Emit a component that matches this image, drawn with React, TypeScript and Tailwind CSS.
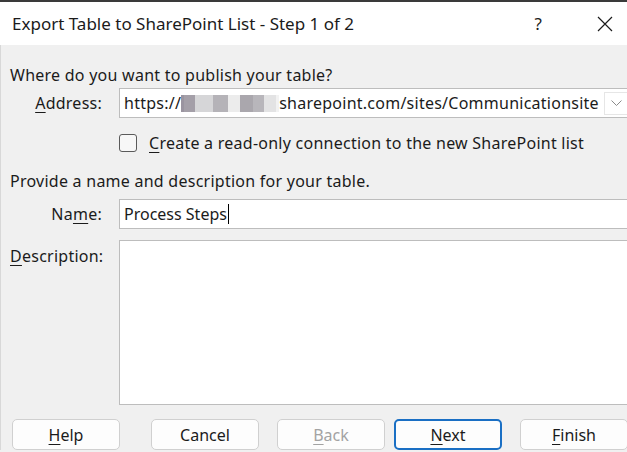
import React from "react";

const font = { fontFamily: '"Noto Sans", "Open Sans", sans-serif' };

const U: React.FC<{ children: React.ReactNode }> = ({ children }) => (
  <span className="underline underline-offset-[3px] decoration-1">{children}</span>
);

interface DialogButtonProps {
  children: React.ReactNode;
  className?: string;
  primary?: boolean;
  disabled?: boolean;
}

const DialogButton: React.FC<DialogButtonProps> = ({ children, className = "", primary, disabled }) => (
  <div
    className={`flex h-[31px] w-[108px] shrink-0 items-center justify-center rounded-[5px] bg-[#fdfdfd] ${
      primary ? "border-2 border-[#1a6fc4]" : "border border-[#d0d0d0]"
    } ${disabled ? "text-[#a3a3a3]" : "text-[#1b1b1b]"} ${className}`}
  >
    {children}
  </div>
);

const App: React.FC = () => {
  return (
    <div className="h-[452px] w-[627px] overflow-hidden bg-[#f0f0f0] text-[#1b1b1b]" style={font}>
      <div className="h-[2px] bg-[#3a3a3a]" />
      <div className="flex h-[43px] items-center bg-white pl-[12px] text-[17px]">
        <span className="flex-1">Export Table to SharePoint List - Step 1 of 2</span>
        <span className="mr-[55px] text-[17px]">?</span>
        <svg width="16" height="16" viewBox="0 0 16 16" className="mr-[14px]">
          <path d="M1 1 L15 15 M15 1 L1 15" stroke="#1b1b1b" strokeWidth="1.2" fill="none" />
        </svg>
      </div>

      <div className="border-l border-[#d8d8d8] pl-[9px] text-[16px] leading-[20px] tracking-[0.25px]">
        <div className="pt-[20px]">Where do you want to publish your table?</div>

        <div className="mt-[3px] flex items-center">
          <div className="w-[109px] pr-[17px] text-right">
            <U>A</U>ddress:
          </div>
          <div className="flex h-[30px] flex-1 items-center border border-[#bdbdbd] bg-white pl-[4px] -mr-[6px]">
            <span>https://</span>
            <span className="flex h-[17px] items-center">
              <span className="h-[17px] w-[3px] bg-[#9a94a0]" />
              <span className="h-[17px] w-[11px] bg-[#a49fa8]" />
              <span className="h-[17px] w-[18px] bg-[#d6d6d8]" />
              <span className="h-[17px] w-[15px] bg-[#b5b3b8]" />
              <span className="h-[17px] w-[12px] bg-[#ececec]" />
              <span className="h-[17px] w-[13px] bg-[#aaa7ad]" />
              <span className="h-[17px] w-[11px] bg-[#b8b6bb]" />
              <span className="h-[17px] w-[12px] bg-[#e3e3e4]" />
              <span className="h-[17px] w-[3px] bg-[#f2f2f2]" />
            </span>
            <span className="flex-1 truncate">sharepoint.com/sites/Communicationsite</span>
            <div className="mr-[4px] flex h-[23px] w-[24px] shrink-0 items-center justify-center border border-[#e6e6e6] bg-white">
              <svg width="11" height="6" viewBox="0 0 11 6">
                <path d="M0.5 0.5 L5.5 5.5 L10.5 0.5" stroke="#8a8a8a" strokeWidth="1" fill="none" />
              </svg>
            </div>
          </div>
        </div>

        <div className="mt-[15px] flex h-[20px] items-center pl-[109px]">
          <div className="h-[18px] w-[18px] rounded-[3px] border-[1.5px] border-[#5a5a5a] bg-[#f7f7f7]" />
          <span className="ml-[12px]">
            <U>C</U>reate a read-only connection to the new SharePoint list
          </span>
        </div>

        <div className="mt-[18px]">Provide a name and description for your table.</div>

        <div className="mt-[8px] flex items-center">
          <div className="w-[109px] pr-[17px] text-right">
            Na<U>m</U>e:
          </div>
          <div className="flex h-[30px] flex-1 items-center border border-[#bdbdbd] bg-white pl-[4px] -mr-[6px] tracking-normal">
            <span>Process Steps</span>
            <span className="ml-[1px] h-[20px] w-[1px] bg-black" />
          </div>
        </div>

        <div className="mt-[11px] flex">
          <div className="w-[109px] pt-[6px] pr-[17px] text-right">
            <U>D</U>escription:
          </div>
          <div className="h-[165px] flex-1 border border-[#bdbdbd] bg-white -mr-[6px]" />
        </div>

        <div className="mt-[14px] flex pl-[2px] tracking-normal">
          <DialogButton>
            <U>H</U>elp
          </DialogButton>
          <DialogButton className="ml-[31px]">Cancel</DialogButton>
          <DialogButton className="ml-[18px]" disabled>
            <U>B</U>ack
          </DialogButton>
          <DialogButton className="ml-[9px]" primary>
            <U>N</U>ext
          </DialogButton>
          <DialogButton className="ml-[18px]">
            <U>F</U>inish
          </DialogButton>
        </div>
      </div>
    </div>
  );
};

export default App;
